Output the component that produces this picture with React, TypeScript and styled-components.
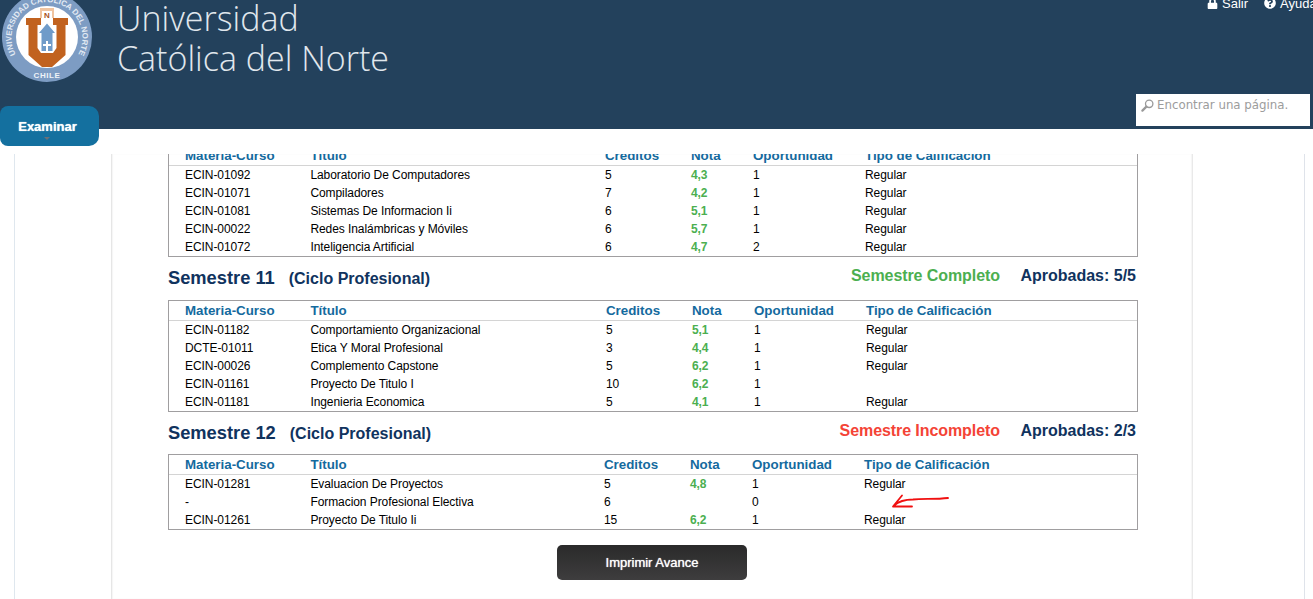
import React from "react";
import styled, { createGlobalStyle } from "styled-components";
import { FaLock, FaQuestionCircle } from "react-icons/fa";

const Global = createGlobalStyle`
  html, body { margin: 0; padding: 0; background: #fff; height: 100%; overflow: hidden; }
  body { font-family: "Liberation Sans", Arial, sans-serif; font-size: 12px; color: #000; }
`;

const Page = styled.div`
  position: relative;
  height: 599px;
  overflow: hidden;
`;

const Header = styled.header`
  height: 129px;
  background: #23415c;
  display: flex;
  justify-content: space-between;
`;

const Brand = styled.div`
  display: flex;
  align-items: flex-start;
`;

const LogoBox = styled.svg`
  width: 92px;
  height: 92px;
  margin: -9px 0 0 1px;
  flex: none;
`;

const BrandName = styled.div`
  margin: -2px 0 0 24px;
  font-family: "Open Sans", sans-serif;
  font-weight: 300;
  font-size: 34px;
  line-height: 40px;
  color: #e0e7ed;
`;

const Tools = styled.div`
  display: flex;
  flex-direction: column;
  justify-content: space-between;
  align-items: flex-end;
  padding-bottom: 3px;
`;

const TopLinks = styled.div`
  display: flex;
  align-items: center;
  height: 16px;
  margin-top: -5px;
  width: 106px;
  white-space: nowrap;
  color: #fff;
  font-size: 13px;
`;

const TopLink = styled.span`
  display: inline-flex;
  align-items: center;
  gap: 4px;
`;

const Divider = styled.span`
  width: 1px;
  height: 16px;
  background: #dfe6ec;
  margin: 0 9px 0 7px;
`;

const SearchBox = styled.div`
  width: 174px;
  height: 32px;
  margin-right: 3px;
  background: #fff;
  display: flex;
  align-items: flex-start;
  gap: 3px;
  padding: 4px 0 0 5px;
  box-sizing: border-box;
  font-family: "DejaVu Sans", Verdana, sans-serif;
  font-size: 11.8px;
  line-height: 15px;
  color: #9c9c9c;
`;

const Tab = styled.div`
  position: absolute;
  left: 0;
  top: 106px;
  width: 99px;
  height: 40px;
  background: #14709f;
  border-radius: 8px 10px 10px 8px;
  color: #fff;
  font-weight: 700;
  font-size: 13px;
  line-height: 42px;
  text-align: center;
  box-sizing: border-box;
  padding-right: 4px;
  text-shadow: 0 0 1px #dff;
  &::after {
    content: "";
    position: absolute;
    left: 44px;
    top: 31px;
    border: 3px solid transparent;
    border-top: 3px solid #6b6f78;
  }
`;

const OuterFrame = styled.div`
  margin: 25px 8px 0 14px;
  height: 445px;
  border-left: 1px solid #dfe7ee;
  border-right: 1px solid #dfe3ea;
  overflow: hidden;
`;

const InnerFrame = styled.main`
  margin: 0 111px 0 96px;
  height: 445px;
  border-left: 1px solid #e6e6e6;
  border-right: 1px solid #e9e9e9;
  box-shadow: inset 1px 0 1px #f6f6f6, inset -1px 0 1px #f6f6f6;
  padding: 0 54px 0 56px;
  overflow: hidden;
`;

const Scroller = styled.div`
  margin-top: -9px;
`;

const TableBox = styled.section`
  position: relative;
  border: 1px solid #a09ea0;
  color: #000;
`;

const GridRow = styled.div<{ $title: number }>`
  display: grid;
  grid-template-columns: 125.4px ${(p) => p.$title - 0.4}px 86px 62px 112px 1fr;
  padding-left: 16px;
  align-items: center;
`;

const HeadRow = styled(GridRow)`
  height: 19px;
  border-bottom: 1px solid #d4d4d4;
  color: #146a9e;
  font-weight: 700;
  font-size: 13.33px;
  line-height: 19px;
`;

const BodyRow = styled(GridRow)`
  height: 18px;
  line-height: 18px;
  letter-spacing: -0.07px;
`;

const Grade = styled.span`
  color: #4caf50;
  font-weight: 700;
`;

const SemesterBar = styled.div`
  height: 42.5px;
  box-sizing: border-box;
  padding: 0 2px 0 0;
  display: flex;
  align-items: center;
  justify-content: space-between;
  color: #10335e;
  font-weight: 700;
`;

const SemesterTitle = styled.h2<{ $shift: number }>`
  margin: ${(p) => p.$shift}px 0 0;
  font-size: 18.3px;
`;

const Cycle = styled.span`
  font-size: 16px;
  margin-left: 14px;
`;

const SemesterStatus = styled.div<{ $shift: number }>`
  display: flex;
  gap: 20.5px;
  margin-top: ${(p) => p.$shift}px;
  font-size: 16px;
`;

const Status = styled.span<{ $complete: boolean }>`
  color: ${(p) => (p.$complete ? "#4caf50" : "#f44336")};
  letter-spacing: -0.08px;
`;

const ButtonRow = styled.div`
  display: flex;
  justify-content: center;
  margin: 15px 2px 0 0;
`;

const PrintButton = styled.button`
  width: 190px;
  height: 35px;
  border: 0;
  border-radius: 5px;
  background: linear-gradient(#2a2a2a, #3e3d3e);
  color: #fff;
  font-family: inherit;
  font-size: 13px;
  text-shadow: 0 0 1px #fff;
`;

const Arrow = styled.svg`
  position: absolute;
  left: 722px;
  top: 38px;
  width: 60px;
  height: 20px;
`;

type Row = [string, string, string, string, string, string];

const sem10: Row[] = [
  ["ECIN-01092", "Laboratorio De Computadores", "5", "4,3", "1", "Regular"],
  ["ECIN-01071", "Compiladores", "7", "4,2", "1", "Regular"],
  ["ECIN-01081", "Sistemas De Informacion Ii", "6", "5,1", "1", "Regular"],
  ["ECIN-00022", "Redes Inalámbricas y Móviles", "6", "5,7", "1", "Regular"],
  ["ECIN-01072", "Inteligencia Artificial", "6", "4,7", "2", "Regular"],
];
const sem11: Row[] = [
  ["ECIN-01182", "Comportamiento Organizacional", "5", "5,1", "1", "Regular"],
  ["DCTE-01011", "Etica Y Moral Profesional", "3", "4,4", "1", "Regular"],
  ["ECIN-00026", "Complemento Capstone", "5", "6,2", "1", "Regular"],
  ["ECIN-01161", "Proyecto De Titulo I", "10", "6,2", "1", ""],
  ["ECIN-01181", "Ingenieria Economica", "5", "4,1", "1", "Regular"],
];
const sem12: Row[] = [
  ["ECIN-01281", "Evaluacion De Proyectos", "5", "4,8", "1", "Regular"],
  ["-", "Formacion Profesional Electiva", "6", "", "0", ""],
  ["ECIN-01261", "Proyecto De Titulo Ii", "15", "6,2", "1", "Regular"],
];

const Table: React.FC<{ title: number; rows: Row[]; children?: React.ReactNode }> = ({ title, rows, children }) => (
  <TableBox>
    <HeadRow $title={title}>
      <span>Materia-Curso</span>
      <span>Título</span>
      <span>Creditos</span>
      <span>Nota</span>
      <span>Oportunidad</span>
      <span>Tipo de Calificación</span>
    </HeadRow>
    {rows.map((r) => (
      <BodyRow $title={title} key={r[0] + r[1]}>
        <span>{r[0]}</span>
        <span>{r[1]}</span>
        <span>{r[2]}</span>
        <Grade>{r[3]}</Grade>
        <span>{r[4]}</span>
        <span>{r[5]}</span>
      </BodyRow>
    ))}
    {children}
  </TableBox>
);

const SemesterHead: React.FC<{ n: number; titleShift: number; statusShift: number; complete: boolean; ok: string }> = ({
  n,
  titleShift,
  statusShift,
  complete,
  ok,
}) => (
  <SemesterBar>
    <SemesterTitle $shift={titleShift}>
      Semestre {n}
      <Cycle>(Ciclo Profesional)</Cycle>
    </SemesterTitle>
    <SemesterStatus $shift={statusShift}>
      <Status $complete={complete}>{complete ? "Semestre Completo" : "Semestre Incompleto"}</Status>
      <span>Aprobadas: {ok}</span>
    </SemesterStatus>
  </SemesterBar>
);

const Logo = () => (
  <LogoBox viewBox="0 0 92 92">
    <defs>
      <path id="ringTop" d="M 14.5 63 A 35.5 35.5 0 1 1 77.5 63" />
    </defs>
    <circle cx="46" cy="46" r="45" fill="#7d9cc3" />
    <circle cx="46" cy="46" r="31" fill="#fff" />
    <text fontFamily="Liberation Sans, sans-serif" fontSize="8" fontWeight="700" fill="#e2eaf3">
      <textPath href="#ringTop" startOffset="50%" textAnchor="middle" textLength="146" lengthAdjust="spacing">
        UNIVERSIDAD CATÓLICA DEL NORTE
      </textPath>
    </text>
    <text x="46" y="87" textAnchor="middle" fontFamily="Liberation Sans, sans-serif" fontSize="8" fontWeight="700" fill="#eef3f8" letterSpacing="0.6">
      CHILE
    </text>
    <path d="M39 17h14v10h-14z" fill="#f0c4a0" />
    <path d="M41 20h10v7h-10z" fill="#fff" />
    <text x="46" y="26.5" textAnchor="middle" fontFamily="Liberation Sans, sans-serif" fontSize="8" fontWeight="700" fill="#a9541c">
      N
    </text>
    <path d="M25 27H40V34H36.5V57L40 62H52L55.5 57V34H52V27H67V34H64.5V64L51 76H41L27.5 64V34H25Z" fill="#c1621f" />
    <path d="M46 32.5L54 42H51.5V60H40.5V42H38Z" fill="#6f9bc9" />
    <path d="M45 50h2v3h3v2h-3v5h-2v-5h-3v-2h3z" fill="#fff" />
  </LogoBox>
);

const SearchGlyph = () => (
  <svg width="13" height="13" viewBox="0 0 13 13" style={{ marginTop: 1, flex: "none" }}>
    <circle cx="8.2" cy="4.8" r="3.7" fill="none" stroke="#999" strokeWidth="1.3" />
    <path d="M5.4 7.6L1.4 11.6" stroke="#999" strokeWidth="2.2" strokeLinecap="round" />
  </svg>
);

export default function App() {
  return (
    <Page>
      <Global />
      <Header>
        <Brand>
          <Logo />
          <BrandName>
            Universidad
            <br />
            Católica del Norte
          </BrandName>
        </Brand>
        <Tools>
          <TopLinks>
            <TopLink>
              <FaLock size={11} />
              Salir
            </TopLink>
            <Divider />
            <TopLink>
              <FaQuestionCircle size={12} />
              Ayuda
            </TopLink>
          </TopLinks>
          <SearchBox>
            <SearchGlyph />
            Encontrar una página.
          </SearchBox>
        </Tools>
      </Header>
      <Tab>Examinar</Tab>
      <OuterFrame>
        <InnerFrame>
          <Scroller>
            <Table title={295} rows={sem10} />
            <SemesterHead n={11} titleShift={0} statusShift={-5} complete ok="5/5" />
            <Table title={296} rows={sem11} />
            <SemesterHead n={12} titleShift={1} statusShift={-3} complete={false} ok="2/3" />
            <Table title={294} rows={sem12}>
              <Arrow viewBox="0 0 60 20">
                <path
                  d="M11 2.5L2 13.5 21 13.5M3 12.5C8 8 14 6.5 22 6.5C32 5.5 45 6.5 57 5"
                  fill="none"
                  stroke="#f01010"
                  strokeWidth="1.8"
                  strokeLinecap="round"
                  strokeLinejoin="round"
                />
              </Arrow>
            </Table>
            <ButtonRow>
              <PrintButton>Imprimir Avance</PrintButton>
            </ButtonRow>
          </Scroller>
        </InnerFrame>
      </OuterFrame>
    </Page>
  );
}
